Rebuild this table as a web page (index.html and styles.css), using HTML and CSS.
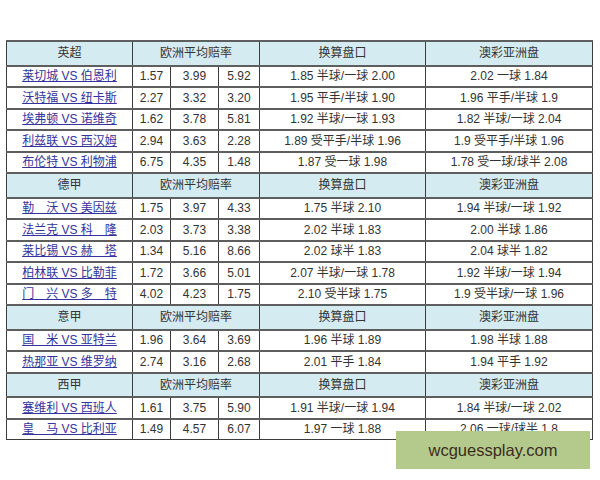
FILE: index.html
```html
<!DOCTYPE html>
<html lang="zh-CN">
<head>
<meta charset="utf-8">
<link rel="stylesheet" href="styles.css">
</head>
<body>
<div class="page">
<table class="odds">
<colgroup>
<col class="c-match"><col class="c-o1"><col class="c-o2"><col class="c-o3"><col class="c-hk"><col class="c-mo">
</colgroup>
<tbody>
<tr class="head"><td>英超</td><td colspan="3">欧洲平均赔率</td><td>换算盘口</td><td>澳彩亚洲盘</td></tr>
<tr><td><a href="#">莱切城 VS 伯恩利</a></td><td>1.57</td><td>3.99</td><td>5.92</td><td>1.85 半球/一球 2.00</td><td>2.02 一球 1.84</td></tr>
<tr><td><a href="#">沃特福 VS 纽卡斯</a></td><td>2.27</td><td>3.32</td><td>3.20</td><td>1.95 平手/半球 1.90</td><td>1.96 平手/半球 1.9</td></tr>
<tr><td><a href="#">埃弗顿 VS 诺维奇</a></td><td>1.62</td><td>3.78</td><td>5.81</td><td>1.92 半球/一球 1.93</td><td>1.82 半球/一球 2.04</td></tr>
<tr><td><a href="#">利兹联 VS 西汉姆</a></td><td>2.94</td><td>3.63</td><td>2.28</td><td>1.89 受平手/半球 1.96</td><td>1.9 受平手/半球 1.96</td></tr>
<tr><td><a href="#">布伦特 VS 利物浦</a></td><td>6.75</td><td>4.35</td><td>1.48</td><td>1.87 受一球 1.98</td><td>1.78 受一球/球半 2.08</td></tr>
<tr class="head"><td>德甲</td><td colspan="3">欧洲平均赔率</td><td>换算盘口</td><td>澳彩亚洲盘</td></tr>
<tr><td><a href="#">勒　沃 VS 美因兹</a></td><td>1.75</td><td>3.97</td><td>4.33</td><td>1.75 半球 2.10</td><td>1.94 半球/一球 1.92</td></tr>
<tr><td><a href="#">法兰克 VS 科　隆</a></td><td>2.03</td><td>3.73</td><td>3.38</td><td>2.02 半球 1.83</td><td>2.00 半球 1.86</td></tr>
<tr><td><a href="#">莱比锡 VS 赫　塔</a></td><td>1.34</td><td>5.16</td><td>8.66</td><td>2.02 球半 1.83</td><td>2.04 球半 1.82</td></tr>
<tr><td><a href="#">柏林联 VS 比勒菲</a></td><td>1.72</td><td>3.66</td><td>5.01</td><td>2.07 半球/一球 1.78</td><td>1.92 半球/一球 1.94</td></tr>
<tr><td><a href="#">门　兴 VS 多　特</a></td><td>4.02</td><td>4.23</td><td>1.75</td><td>2.10 受半球 1.75</td><td>1.9 受半球/一球 1.96</td></tr>
<tr class="head"><td>意甲</td><td colspan="3">欧洲平均赔率</td><td>换算盘口</td><td>澳彩亚洲盘</td></tr>
<tr><td><a href="#">国　米 VS 亚特兰</a></td><td>1.96</td><td>3.64</td><td>3.69</td><td>1.96 半球 1.89</td><td>1.98 半球 1.88</td></tr>
<tr><td><a href="#">热那亚 VS 维罗纳</a></td><td>2.74</td><td>3.16</td><td>2.68</td><td>2.01 平手 1.84</td><td>1.94 平手 1.92</td></tr>
<tr class="head"><td>西甲</td><td colspan="3">欧洲平均赔率</td><td>换算盘口</td><td>澳彩亚洲盘</td></tr>
<tr><td><a href="#">塞维利 VS 西班人</a></td><td>1.61</td><td>3.75</td><td>5.90</td><td>1.91 半球/一球 1.94</td><td>1.84 半球/一球 2.02</td></tr>
<tr><td><a href="#">皇　马 VS 比利亚</a></td><td>1.49</td><td>4.57</td><td>6.07</td><td>1.97 一球 1.88</td><td>2.06 一球/球半 1.8</td></tr>
</tbody>
</table>
<div class="watermark">wcguessplay.com</div>
</div>
</body>
</html>
```
FILE: styles.css
```css
html, body {
  margin: 0;
  padding: 0;
  background: #ffffff;
}
.page {
  position: relative;
  width: 600px;
  height: 480px;
  padding: 40px 0 0 6px;
  box-sizing: border-box;
  font-family: "Liberation Sans", "Noto Sans CJK SC", sans-serif;
  font-size: 12px;
  color: #333333;
}
.odds {
  border-collapse: collapse;
  table-layout: fixed;
  width: 586px;
}
.c-match { width: 126px; }
.c-o1 { width: 38px; }
.c-o2 { width: 48px; }
.c-o3 { width: 41px; }
.c-hk { width: 166px; }
.c-mo { width: 167px; }
.odds td {
  border: 1px solid #3c3c3c;
  border-top: 2px solid #5e5e5e;
  text-align: center;
  padding: 0;
  height: 19.5px;
  line-height: 14px;
  white-space: nowrap;
  overflow: hidden;
}
.odds tr.head td {
  background: #d5ebf2;
  height: 22.5px;
  color: #333333;
}
.odds a {
  color: #34349c;
  text-decoration: underline;
}
.watermark {
  position: absolute;
  left: 396px;
  top: 431px;
  width: 194px;
  height: 38px;
  background: #b4ca8c;
  color: #3d2b1f;
  font-size: 16.5px;
  line-height: 38px;
  text-align: center;
}
```
